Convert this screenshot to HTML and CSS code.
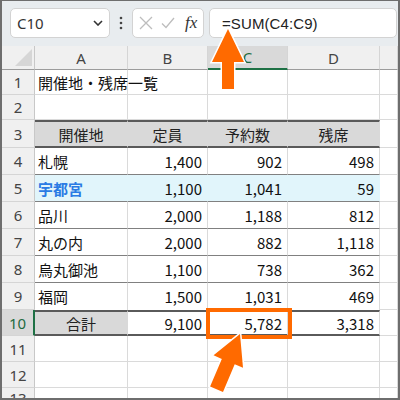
FILE: index.html
```html
<!DOCTYPE html>
<html lang="ja">
<head>
<meta charset="utf-8">
<link rel="stylesheet" href="styles.css">
</head>
<body>
<div class="page">
  <div class="frame">
    <div class="toolbar">
      <div class="namebox">
        <span class="name">C10</span>
        <svg class="chev" width="10" height="6" viewBox="0 0 10 6"><path d="M1 1 L5 5 L9 1" fill="none" stroke="#333" stroke-width="1.6"/></svg>
      </div>
      <div class="dots">
        <svg width="4" height="14" viewBox="0 0 4 14"><circle cx="2" cy="2" r="1.3" fill="#444"/><circle cx="2" cy="7" r="1.3" fill="#444"/><circle cx="2" cy="12" r="1.3" fill="#444"/></svg>
      </div>
      <div class="fbuttons">
        <svg width="14" height="14" viewBox="0 0 14 14"><path d="M1 1 L13 13 M13 1 L1 13" stroke="#bdbdbd" stroke-width="1.3" fill="none"/></svg>
        <svg width="14" height="14" viewBox="0 0 14 14"><path d="M1 7.5 L5 11.5 L13 2" stroke="#bdbdbd" stroke-width="1.3" fill="none"/></svg>
        <span class="fx">fx</span>
      </div>
      <div class="fbar"><span class="formula">=SUM(C4:C9)</span></div>
    </div>
    <div class="grid">
      <div class="ch corner"><span class="tri"></span></div>
      <div class="ch">A</div>
      <div class="ch">B</div>
      <div class="ch sel">C</div>
      <div class="ch">D</div>
      <div class="ch"></div>

      <div class="rh">1</div>
      <div class="c title">開催地・残席一覧</div>
      <div class="c"></div><div class="c"></div><div class="c"></div><div class="c"></div>

      <div class="rh">2</div>
      <div class="c"></div><div class="c"></div><div class="c"></div><div class="c"></div><div class="c"></div>

      <div class="rh">3</div>
      <div class="c th">開催地</div>
      <div class="c th">定員</div>
      <div class="c th">予約数</div>
      <div class="c th">残席</div>
      <div class="c"></div>

      <div class="rh">4</div>
      <div class="c td">札幌</div>
      <div class="c td num">1,400</div>
      <div class="c td num">902</div>
      <div class="c td num">498</div>
      <div class="c"></div>

      <div class="rh">5</div>
      <div class="c td hl name-hl">宇都宮</div>
      <div class="c td hl num">1,100</div>
      <div class="c td hl num">1,041</div>
      <div class="c td hl num">59</div>
      <div class="c"></div>

      <div class="rh">6</div>
      <div class="c td">品川</div>
      <div class="c td num">2,000</div>
      <div class="c td num">1,188</div>
      <div class="c td num">812</div>
      <div class="c"></div>

      <div class="rh">7</div>
      <div class="c td">丸の内</div>
      <div class="c td num">2,000</div>
      <div class="c td num">882</div>
      <div class="c td num">1,118</div>
      <div class="c"></div>

      <div class="rh">8</div>
      <div class="c td">烏丸御池</div>
      <div class="c td num">1,100</div>
      <div class="c td num">738</div>
      <div class="c td num">362</div>
      <div class="c"></div>

      <div class="rh">9</div>
      <div class="c td last">福岡</div>
      <div class="c td last num">1,500</div>
      <div class="c td last num">1,031</div>
      <div class="c td last num">469</div>
      <div class="c"></div>

      <div class="rh selr">10</div>
      <div class="c tot totlabel">合計</div>
      <div class="c tot num">9,100</div>
      <div class="c tot num">5,782</div>
      <div class="c tot num">3,318</div>
      <div class="c"></div>

      <div class="rh">11</div>
      <div class="c"></div><div class="c"></div><div class="c"></div><div class="c"></div><div class="c"></div>

      <div class="rh">12</div>
      <div class="c"></div><div class="c"></div><div class="c"></div><div class="c"></div><div class="c"></div>

      <div class="rh">13</div>
      <div class="c"></div><div class="c"></div><div class="c"></div><div class="c"></div><div class="c"></div>
    </div>
  </div>
  <div class="hlbox"></div>
  <svg class="arrows" width="400" height="400" viewBox="0 0 400 400">
    <polygon points="228,29 244,62 234,62 234,89 222,89 222,62 212,62" fill="#ff6a00" stroke="#fff" stroke-width="3" stroke-linejoin="miter" paint-order="stroke"/>
    <g transform="translate(240,334) rotate(23)">
      <polygon points="0,0 16,30 7,30 7,60 -7,60 -7,30 -16,30" fill="#ff6a00" stroke="#fff" stroke-width="3" paint-order="stroke"/>
    </g>
  </svg>
</div>
</body>
</html>
```
FILE: styles.css
```css
html, body {
  margin: 0;
  padding: 0;
  background: #fff;
}

.page {
  position: relative;
  width: 400px;
  height: 400px;
  overflow: hidden;
}

.frame {
  width: 400px;
  height: 400px;
  box-sizing: border-box;
  border-left: 2px solid #6e6e6e;
  border-right: 2px solid #6e6e6e;
  border-top: 1px solid #6e6e6e;
  border-bottom: 2px solid #6e6e6e;
  overflow: hidden;
  display: flex;
  flex-direction: column;
}

.toolbar {
  height: 45px;
  flex: none;
  box-sizing: border-box;
  background: #e8ecef;
  display: flex;
  align-items: flex-start;
  padding: 7px 0 0 8px;
}

.namebox {
  width: 100px;
  height: 30px;
  box-sizing: border-box;
  background: #fff;
  border: 1px solid #d3d3d3;
  border-radius: 5px;
  display: flex;
  align-items: center;
  justify-content: space-between;
  padding: 0 6px 0 6px;
}

.name {
  font-family: "Noto Sans", sans-serif;
  font-size: 15px;
  color: #333;
}

.dots {
  width: 22px;
  height: 30px;
  display: flex;
  align-items: center;
  justify-content: center;
}

.fbuttons {
  width: 72px;
  height: 30px;
  box-sizing: border-box;
  background: #fff;
  border: 1px solid #d3d3d3;
  border-radius: 5px;
  display: flex;
  align-items: center;
  padding-left: 6px;
  gap: 8px;
}

.fx {
  font-family: "Liberation Serif", serif;
  font-style: italic;
  font-size: 17px;
  color: #333;
  margin-left: 2px;
}

.fbar {
  flex: 1;
  height: 30px;
  margin-left: 5px;
  margin-right: 1px;
  box-sizing: border-box;
  background: #fff;
  border: 1px solid #d3d3d3;
  border-radius: 5px;
  display: flex;
  align-items: center;
  padding-left: 12px;
}

.formula {
  font-family: "Liberation Sans", sans-serif;
  font-size: 15px;
  color: #222;
  letter-spacing: 0.1px;
}

.grid {
  flex: 1;
  display: grid;
  grid-template-columns: 33px 93px 80px 80px 92px 1fr;
  grid-template-rows: 24px 25px 25px 28px repeat(6, 27px) 26px 26px 26px 1fr;
  font-family: "Noto Sans CJK JP", sans-serif;
  font-size: 15px;
}

.grid > div {
  box-sizing: border-box;
  display: flex;
  align-items: center;
  overflow: hidden;
  white-space: nowrap;
}

.ch {
  background: #f0f0f0;
  border-right: 1px solid #d5d5d5;
  border-bottom: 1px solid #9c9c9c;
  justify-content: center;
  font-family: "Noto Sans", sans-serif;
  color: #444;
}

.corner {
  position: relative;
  border-right-color: #c8c8c8;
}

.tri {
  position: absolute;
  right: 2px;
  bottom: 3px;
  width: 0;
  height: 0;
  border-left: 17px solid transparent;
  border-bottom: 17px solid #d6d6d6;
}

.ch.sel {
  background: #d9d9d9;
  color: #1d6b3e;
  border-bottom: 2px solid #1e7145;
}

.rh {
  background: #f0f0f0;
  border-right: 1px solid #c8c8c8;
  border-bottom: 1px solid #d5d5d5;
  justify-content: center;
  font-family: "Noto Sans", sans-serif;
  color: #444;
}

.rh.selr {
  background: #d9d9d9;
  color: #1d6b3e;
  border-right: 2px solid #1e7145;
}

.c {
  border-right: 1px solid #dadada;
  border-bottom: 1px solid #dadada;
  color: #111;
}

.title {
  padding-left: 3px;
  overflow: visible !important;
}

.th {
  background: #d9d9d9;
  border-top: 2px solid #5a5a5a;
  border-bottom: 2px solid #5a5a5a;
  border-right-color: #d9d9d9;
  justify-content: center;
  color: #222;
}

.td {
  padding-left: 3px;
  border-bottom-color: #808080;
}

.td.last {
  border-bottom: none;
}

.num {
  justify-content: flex-end;
  padding-right: 5px;
}

.hl {
  background: #e1f5fb;
  border-right-color: #e1f5fb;
}

.name-hl {
  color: #2a7be4;
  font-weight: bold;
}

.tot {
  border-top: 2px solid #5a5a5a;
  border-bottom: 2px solid #5a5a5a;
}

.totlabel {
  background: #d9d9d9;
  border-right-color: #d9d9d9;
  justify-content: center;
  color: #222;
}

.hlbox {
  position: absolute;
  left: 206px;
  top: 308px;
  width: 86px;
  height: 31px;
  box-sizing: border-box;
  border: 4px solid #ff6a00;
}

.arrows {
  position: absolute;
  left: 0;
  top: 0;
}
```
